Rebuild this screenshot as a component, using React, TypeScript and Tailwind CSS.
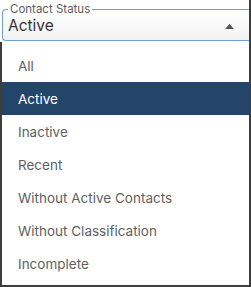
import { useState } from "react";

const options = [
  "All",
  "Active",
  "Inactive",
  "Recent",
  "Without Active Contacts",
  "Without Classification",
  "Incomplete",
];

export default function App() {
  const [selected] = useState("Active");

  return (
    <div
      className="w-[251px] h-[287px] bg-white border-r-2 border-[#3d3d3d] flex flex-col overflow-hidden"
      style={{ fontFamily: "Inter, 'Liberation Sans', Arial, sans-serif" }}
    >
      {/* Select field */}
      <div className="pt-[3px] pl-[2px]">
        <fieldset className="relative h-[38px] border border-r-0 border-[#6c9fd6] rounded-l-[4px] bg-gradient-to-b from-white to-[#f2f2f2] px-[5px]">
          <legend className="px-[2px] text-[11.5px] leading-[12px] text-[#5c5c5c]">Contact Status</legend>
          <div className="flex items-center justify-between pr-[10px] -mt-[1px]">
            <span className="text-[15.5px] text-[#333]">{selected}</span>
            <svg width="9" height="5" viewBox="0 0 9 5" className="mt-[1px]">
              <path d="M0 5 L4.5 0 L9 5 Z" fill="#555" />
            </svg>
          </div>
        </fieldset>
      </div>

      {/* Menu */}
      <div className="flex-1 mt-[1px] border-l-2 border-b-2 border-[#3d3d3d] pt-[7px]">
        {options.map(opt => (
          <div
            key={opt}
            className={`h-[33px] flex items-center pl-[16px] pt-[2px] text-[13.5px] ${
              opt === selected ? "bg-[#23456a] text-white" : "text-[#5f5f5f]"
            }`}
          >
            {opt}
          </div>
        ))}
      </div>
    </div>
  );
}
